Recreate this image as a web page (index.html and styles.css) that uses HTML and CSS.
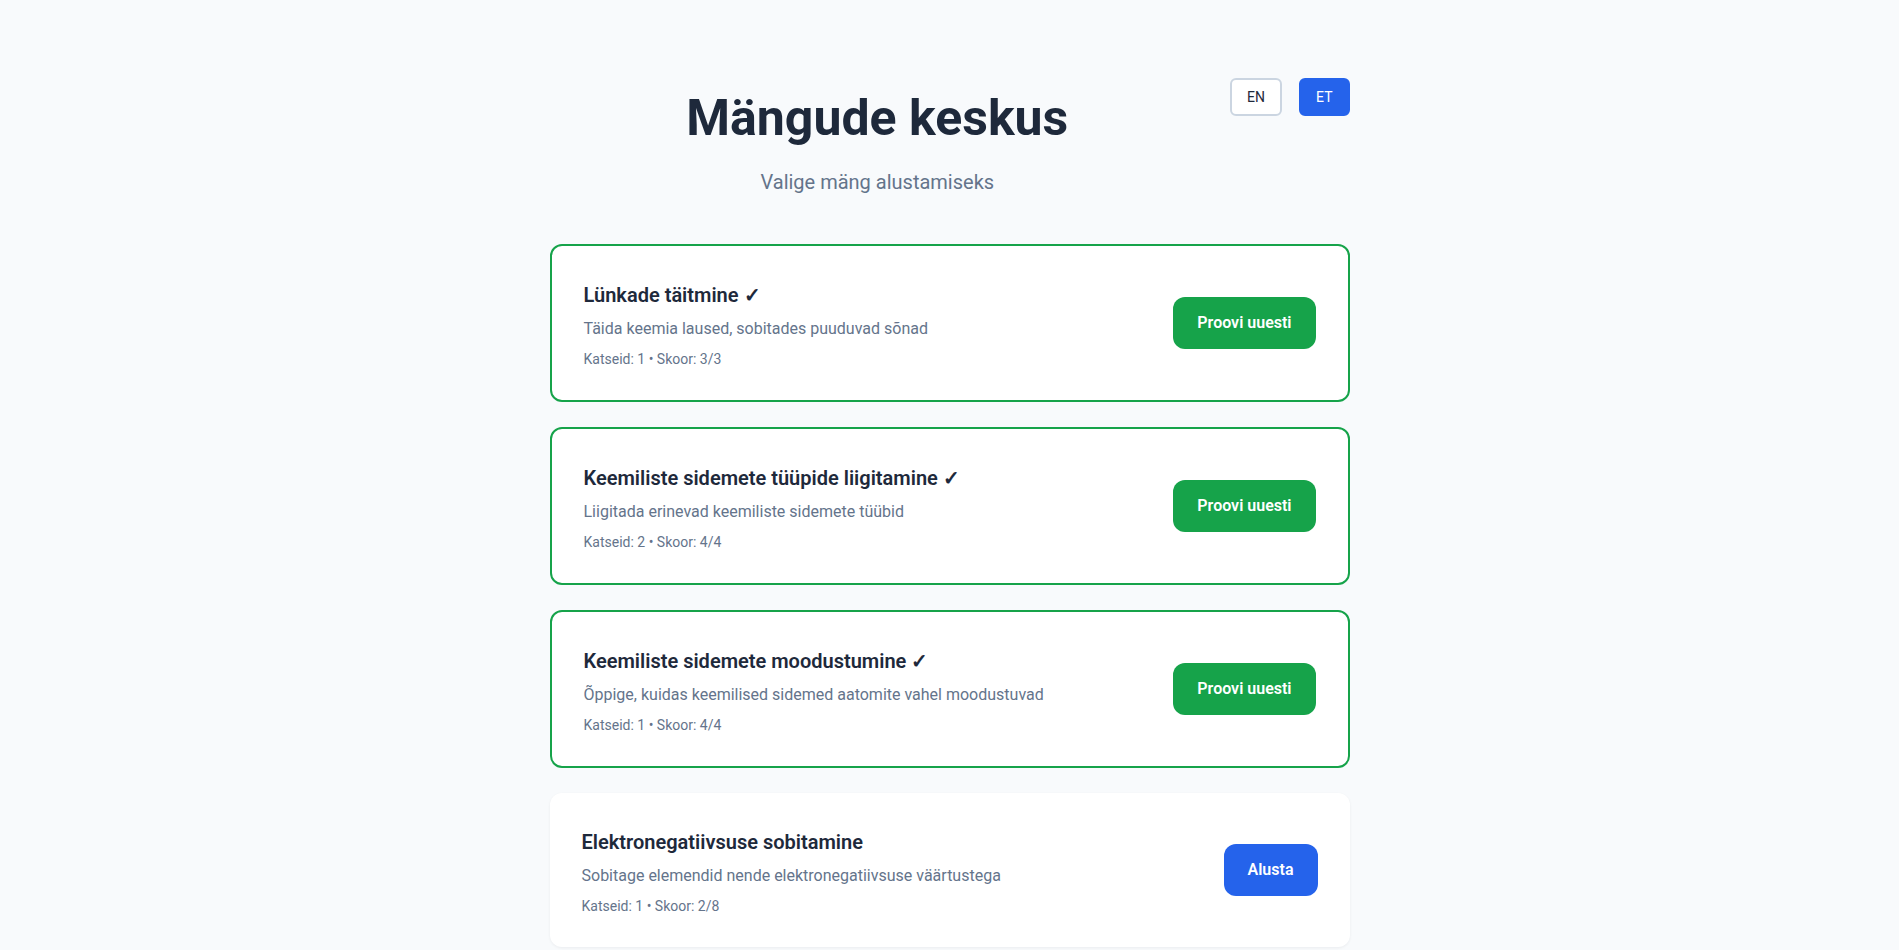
FILE: index.html
```html
<!DOCTYPE html>
<html lang="et">
<head>
  <meta charset="UTF-8">
  <meta name="viewport" content="width=device-width, initial-scale=1.0">
  <title>Mängude keskus</title>
  <link rel="stylesheet" href="styles.css">
</head>
<body>
  <div class="container">
    <header class="page-header">
      <div class="heading">
        <h1>Mängude keskus</h1>
        <p class="subtitle">Valige mäng alustamiseks</p>
      </div>
      <div class="lang-switch">
        <button class="lang-btn">EN</button>
        <button class="lang-btn active">ET</button>
      </div>
    </header>

    <div class="game-list">
      <div class="game-card done">
        <div class="game-info">
          <div class="game-title">Lünkade täitmine ✓</div>
          <div class="game-desc">Täida keemia laused, sobitades puuduvad sõnad</div>
          <div class="game-meta">Katseid: 1 • Skoor: 3/3</div>
        </div>
        <button class="game-btn retry">Proovi uuesti</button>
      </div>

      <div class="game-card done">
        <div class="game-info">
          <div class="game-title">Keemiliste sidemete tüüpide liigitamine ✓</div>
          <div class="game-desc">Liigitada erinevad keemiliste sidemete tüübid</div>
          <div class="game-meta">Katseid: 2 • Skoor: 4/4</div>
        </div>
        <button class="game-btn retry">Proovi uuesti</button>
      </div>

      <div class="game-card done">
        <div class="game-info">
          <div class="game-title">Keemiliste sidemete moodustumine ✓</div>
          <div class="game-desc">Õppige, kuidas keemilised sidemed aatomite vahel moodustuvad</div>
          <div class="game-meta">Katseid: 1 • Skoor: 4/4</div>
        </div>
        <button class="game-btn retry">Proovi uuesti</button>
      </div>

      <div class="game-card">
        <div class="game-info">
          <div class="game-title">Elektronegatiivsuse sobitamine</div>
          <div class="game-desc">Sobitage elemendid nende elektronegatiivsuse väärtustega</div>
          <div class="game-meta">Katseid: 1 • Skoor: 2/8</div>
        </div>
        <button class="game-btn start">Alusta</button>
      </div>
    </div>
  </div>
</body>
</html>
```

FILE: styles.css
```css
body {
  font-family: "Segoe UI", Roboto, "Noto Sans", sans-serif;
  background-color: #f8fafc;
  color: #1e293b;
  margin: 0;
}

.container {
  max-width: 800px;
  margin: 0 auto;
  padding: 78px 0 48px;
}

/* header: centered title with the language switch on the right */
.page-header {
  display: flex;
  align-items: flex-start;
  gap: 25px;
  margin-bottom: 48px;
}

.heading {
  flex: 1;
  text-align: center;
  padding-top: 16px;
}

h1 {
  margin: 0;
  font-size: 50px;
  line-height: 48px;
  font-weight: 700;
  color: #1e293b;
}

.subtitle {
  margin: 26px 0 0;
  font-size: 20px;
  line-height: 28px;
  color: #64748b;
}

.lang-switch {
  display: flex;
  gap: 17px;
}

.lang-btn {
  font-family: inherit;
  font-size: 14px;
  line-height: 20px;
  padding: 7px 15px;
  border: 2px solid #cbd5e1;
  border-radius: 6px;
  background-color: #fff;
  color: #1e293b;
  cursor: pointer;
}

.lang-btn.active {
  background-color: #2563eb;
  border-color: #2563eb;
  color: #fff;
}

/* game cards */
.game-list {
  display: flex;
  flex-direction: column;
  gap: 25px;
}

.game-card {
  display: flex;
  align-items: center;
  justify-content: space-between;
  gap: 24px;
  background-color: #fff;
  border-radius: 12px;
  padding: 35px 32px 31px;
  box-shadow: 0 1px 3px rgba(15, 23, 42, 0.06);
}

.game-card.done {
  border: 2px solid #16a34a;
  box-shadow: none;
}

.game-title {
  font-size: 20px;
  line-height: 28px;
  font-weight: 600;
  color: #1e293b;
}

.game-desc {
  margin-top: 8px;
  font-size: 16px;
  line-height: 24px;
  color: #64748b;
}

.game-meta {
  margin-top: 8px;
  font-size: 14px;
  line-height: 20px;
  color: #64748b;
}

.game-btn {
  flex-shrink: 0;
  margin-bottom: 5px;
  font-family: inherit;
  font-size: 16px;
  line-height: 24px;
  font-weight: 600;
  color: #fff;
  border: none;
  border-radius: 12px;
  padding: 14px 24px;
  cursor: pointer;
}

.game-btn.retry {
  background-color: #16a34a;
}

.game-btn.start {
  background-color: #2563eb;
}
```
